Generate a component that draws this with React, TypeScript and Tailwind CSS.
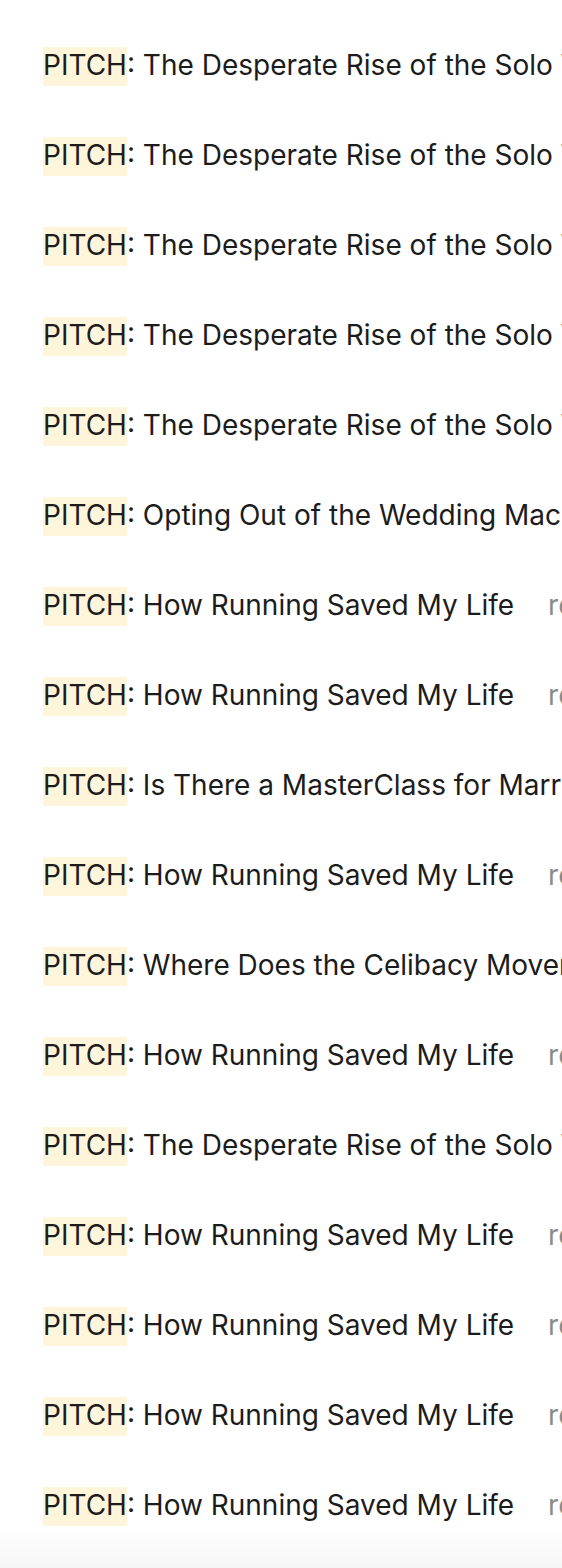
const titles = [
  { title: 'The Desperate Rise of the Solo Wedding', note: 'read more' },
  { title: 'The Desperate Rise of the Solo Wedding', note: 'read more' },
  { title: 'The Desperate Rise of the Solo Wedding', note: 'read more' },
  { title: 'The Desperate Rise of the Solo Wedding', note: 'read more' },
  { title: 'The Desperate Rise of the Solo Wedding', note: 'read more' },
  { title: 'Opting Out of the Wedding Machine', note: 'read more' },
  { title: 'How Running Saved My Life', note: 'read more' },
  { title: 'How Running Saved My Life', note: 'read more' },
  { title: 'Is There a MasterClass for Marriage?', note: 'read more' },
  { title: 'How Running Saved My Life', note: 'read more' },
  { title: 'Where Does the Celibacy Movement Go Next?', note: 'read more' },
  { title: 'How Running Saved My Life', note: 'read more' },
  { title: 'The Desperate Rise of the Solo Wedding', note: 'read more' },
  { title: 'How Running Saved My Life', note: 'read more' },
  { title: 'How Running Saved My Life', note: 'read more' },
  { title: 'How Running Saved My Life', note: 'read more' },
  { title: 'How Running Saved My Life', note: 'read more' },
];

export default function App() {
  return (
    <div className="relative h-[1568px] w-[562px] overflow-hidden bg-white font-['Inter',sans-serif]">
      <ul className="flex flex-col gap-[49px] pl-[43px] pt-[45px]">
        {titles.map((t, i) => (
          <li key={i} className="whitespace-nowrap text-[28px] leading-[41px] text-[#1c1c1c]">
            <span className="bg-[#fef5da] pt-px pb-[4px]">PITCH</span>: {t.title}
            <span className="ml-[34px] text-[#8a8a8a]">{t.note}</span>
          </li>
        ))}
      </ul>
      {/* bottom fade */}
      <div className="pointer-events-none absolute inset-x-0 bottom-0 h-[42px] bg-gradient-to-b from-white/0 to-[#f6f6f6]" />
    </div>
  );
}
